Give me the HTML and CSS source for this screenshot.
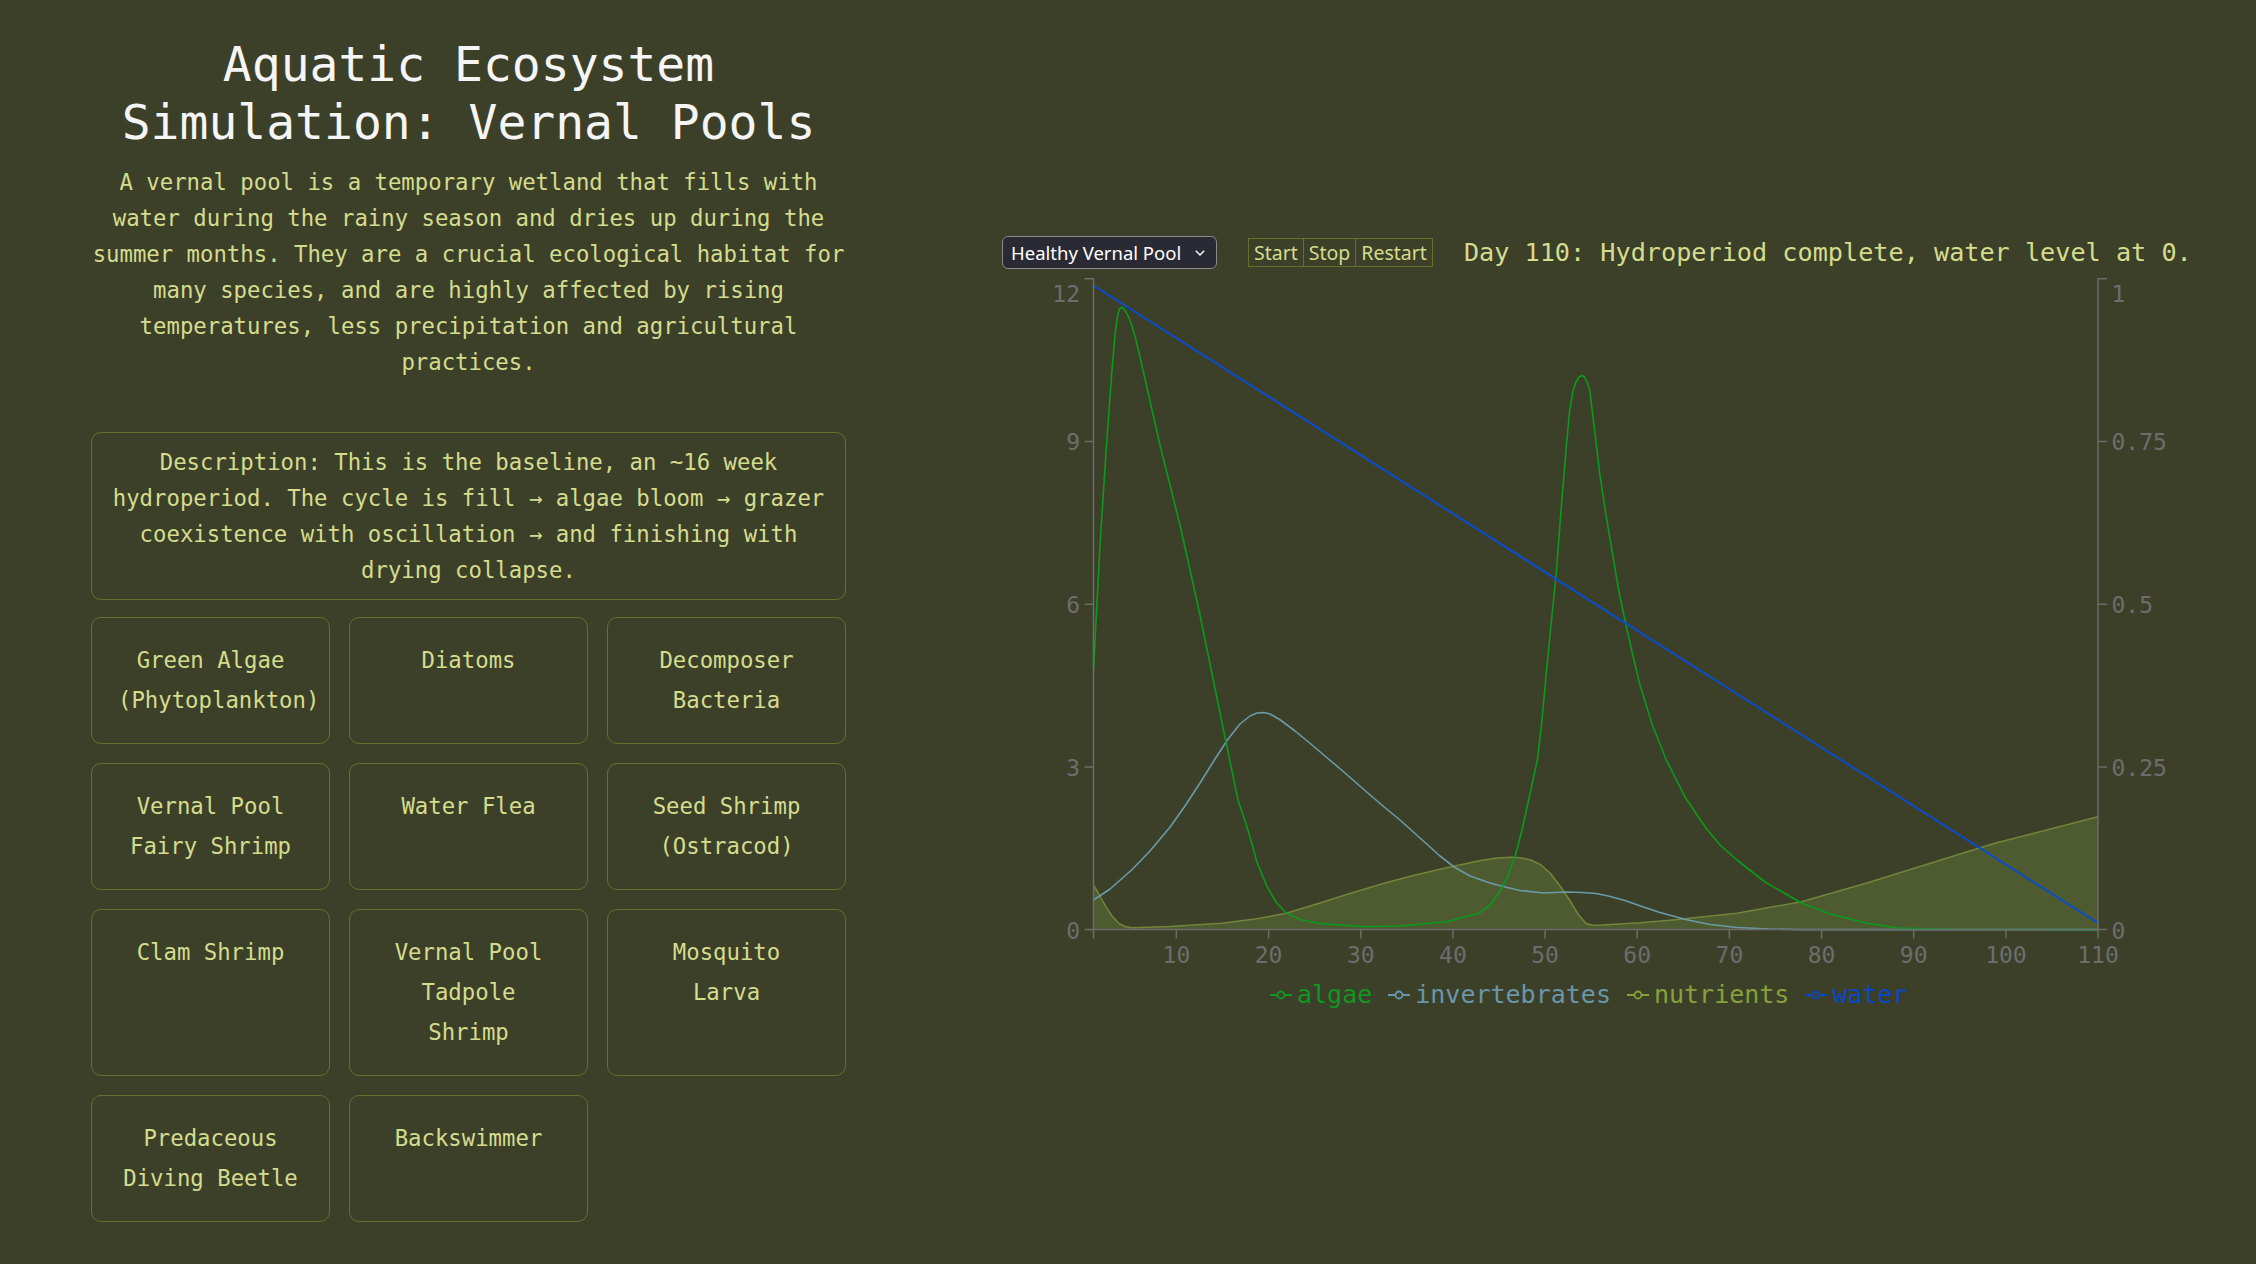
FILE: index.html
```html
<!DOCTYPE html>
<html lang="en">
<head>
  <meta charset="UTF-8" />
  <meta name="viewport" content="width=device-width, initial-scale=1.0"/>
  <title>Aquatic Ecosystem Simulation: Vernal Pools</title>
  <link rel="stylesheet" href="styles.css">
</head>
<body>
  <div class="page">
    <div class="intro">
      <h1>Aquatic Ecosystem Simulation: Vernal Pools</h1>
      <p class="lead">A vernal pool is a temporary wetland that fills with water during the rainy season and dries up during the summer months. They are a crucial ecological habitat for many species, and are highly affected by rising temperatures, less precipitation and agricultural practices.</p>

      <!-- Scenario description -->
      <div class="description">Description: This is the baseline, an ~16 week hydroperiod. The cycle is fill → algae bloom → grazer coexistence with oscillation → and finishing with drying collapse.</div>

      <!-- Species -->
      <div class="species">
        <div class="species-card">Green Algae (Phytoplankton)</div>
        <div class="species-card">Diatoms</div>
        <div class="species-card">Decomposer Bacteria</div>
        <div class="species-card">Vernal Pool Fairy Shrimp</div>
        <div class="species-card">Water Flea</div>
        <div class="species-card">Seed Shrimp (Ostracod)</div>
        <div class="species-card">Clam Shrimp</div>
        <div class="species-card">Vernal Pool Tadpole Shrimp</div>
        <div class="species-card">Mosquito Larva</div>
        <div class="species-card">Predaceous Diving Beetle</div>
        <div class="species-card">Backswimmer</div>
      </div>
    </div>

    <div class="sim">
      <div class="controls">
        <label class="scenario">
          <select name="scenario" id="scenario">
            <option value="healthy">Healthy Vernal Pool</option>
            <option value="drought">Drought Year</option>
            <option value="runoff">Agricultural Runoff</option>
          </select>
          <svg class="chevron" width="10" height="6" viewBox="0 0 10 6"><polyline points="0.8,0.8 5,5 9.2,0.8" fill="none" stroke="#ffffff" stroke-width="1.4"/></svg>
        </label>
        <div class="buttons">
          <button type="button" class="button">Start</button>
          <button type="button" class="button">Stop</button>
          <button type="button" class="button">Restart</button>
        </div>
        <span class="status">Day 110: Hydroperiod complete, water level at 0.</span>
      </div>

      <!-- Chart: drawn in page coordinates -->
      <svg class="chart" width="1240" height="700" viewBox="1002 275 1240 700">
        <path class="nutrients-area" d="M1093.5,885 L1100,896 L1105.9,906.7 L1112,916 L1118.8,923.3 L1125,926.5 L1131.6,927.7 L1170,926.5 L1221.8,923.3 L1255,919 L1286.2,913.3 L1320,903 L1350.6,893.3 L1385,883 L1415,875 L1450,867 L1479.5,860.7 L1497,858 L1511.7,857.3 L1522,858 L1531,860 L1541,865 L1550.3,873.3 L1560,886 L1569.6,900 L1578,914 L1585.7,923.3 L1592,925.2 L1601.9,925 L1640,922.8 L1672.7,920 L1737,913.3 L1801.5,901.7 L1866,883.3 L1930.4,863.3 L1994.8,843.3 L2098,816.7 L2098,929.6 L1093.5,929.6 Z"/>
        <path class="nutrients" d="M1093.5,885 L1100,896 L1105.9,906.7 L1112,916 L1118.8,923.3 L1125,926.5 L1131.6,927.7 L1170,926.5 L1221.8,923.3 L1255,919 L1286.2,913.3 L1320,903 L1350.6,893.3 L1385,883 L1415,875 L1450,867 L1479.5,860.7 L1497,858 L1511.7,857.3 L1522,858 L1531,860 L1541,865 L1550.3,873.3 L1560,886 L1569.6,900 L1578,914 L1585.7,923.3 L1592,925.2 L1601.9,925 L1640,922.8 L1672.7,920 L1737,913.3 L1801.5,901.7 L1866,883.3 L1930.4,863.3 L1994.8,843.3 L2098,816.7"/>
        <path class="invertebrates" d="M1093.5,900 L1110,889 L1131.6,870 L1150,851 L1170.3,826.7 L1185,806 L1200,783 L1215,759 L1228,739 L1240,724 L1250,716 L1257,713 L1264,712.5 L1270,714 L1279.7,719.5 L1295,731 L1309.7,743 L1325,756 L1345,773 L1371.3,796 L1383,806 L1400,820 L1420,838 L1440,856 L1453.7,866.7 L1470,876 L1490,883 L1505.2,887 L1520,890.5 L1544,893 L1565,892 L1582.5,892.5 L1596,893.5 L1608.3,896 L1625,900.5 L1640.5,906 L1660,912.5 L1685.6,919.5 L1710,924.5 L1737,927.5 L1769.3,929 L1800,929.6 L2098,929.6"/>
        <path class="algae" d="M1093.5,670 L1100,545 L1106.5,445 L1112,370 L1115,335 L1117.5,316 L1119.5,309 L1121.5,307.5 L1123.5,308.5 L1126,312 L1129,318 L1132,326 L1136,340 L1140,357 L1160,445 L1180,525 L1200,615 L1220,713 L1238,800 L1248,830 L1257,862 L1267,886.7 L1276,902 L1286,913 L1300,919.5 L1318,923.3 L1363,926.7 L1400,926 L1447,921.7 L1479.5,913 L1490,905 L1498.8,893 L1507,878 L1515,856.7 L1522,830 L1528,803 L1533,780 L1537.4,760 L1542,720 L1546.3,673 L1551,625 L1556.3,573 L1561,510 L1566.3,446.7 L1569.5,412 L1573,391 L1576,382 L1579,377 L1581.7,375.5 L1584.5,377 L1587,382 L1589.7,390 L1594,425 L1599.7,473.3 L1606,515 L1613,556.7 L1619,592 L1626,625 L1633,656 L1640,685 L1652,724 L1666.3,760 L1685,797 L1705,826.7 L1720,845 L1737,860 L1765,882 L1801.5,903 L1830,914 L1866,923 L1898,928 L1950,929.3 L2098,929.6"/>
        <path class="water" d="M1093.5,285.5 L2098,923"/>

        <!-- axes -->
        <g class="axis">
          <path d="M1084.5,278.7 H1093.5 V929.6 H1084.5"/>
          <path d="M1084.5,441.4 H1093.5 M1084.5,604.2 H1093.5 M1084.5,766.9 H1093.5"/>
          <path d="M2107,278.7 H2098 V929.6 H2107"/>
          <path d="M2107,441.4 H2098 M2107,604.2 H2098 M2107,766.9 H2098"/>
          <path d="M1093.5,938.6 V929.6 H2098 V938.6"/>
          <path d="M1176.4,929.6 v9 M1268.6,929.6 v9 M1360.8,929.6 v9 M1452.9,929.6 v9 M1545.1,929.6 v9 M1637.2,929.6 v9 M1729.4,929.6 v9 M1821.6,929.6 v9 M1913.7,929.6 v9 M2005.9,929.6 v9"/>
        </g>
        <g class="tick-labels" text-anchor="end">
          <text x="1080" y="302">12</text>
          <text x="1080" y="450.4">9</text>
          <text x="1080" y="613.2">6</text>
          <text x="1080" y="775.9">3</text>
          <text x="1080" y="938.6">0</text>
        </g>
        <g class="tick-labels" text-anchor="start">
          <text x="2111.5" y="302">1</text>
          <text x="2111.5" y="450.4">0.75</text>
          <text x="2111.5" y="613.2">0.5</text>
          <text x="2111.5" y="775.9">0.25</text>
          <text x="2111.5" y="938.6">0</text>
        </g>
        <g class="tick-labels" text-anchor="middle">
          <text x="1176.4" y="962.5">10</text>
          <text x="1268.6" y="962.5">20</text>
          <text x="1360.8" y="962.5">30</text>
          <text x="1452.9" y="962.5">40</text>
          <text x="1545.1" y="962.5">50</text>
          <text x="1637.2" y="962.5">60</text>
          <text x="1729.4" y="962.5">70</text>
          <text x="1821.6" y="962.5">80</text>
          <text x="1913.7" y="962.5">90</text>
          <text x="2005.9" y="962.5">100</text>
          <text x="2098" y="962.5">110</text>
        </g>
      </svg>

      <div class="legend">
        <span class="legend-item algae-key"><svg width="24" height="12" viewBox="0 0 24 12"><line x1="1" y1="6" x2="23" y2="6"/><circle cx="12" cy="6" r="3.5"/></svg>algae</span>
        <span class="legend-item invertebrates-key"><svg width="24" height="12" viewBox="0 0 24 12"><line x1="1" y1="6" x2="23" y2="6"/><circle cx="12" cy="6" r="3.5"/></svg>invertebrates</span>
        <span class="legend-item nutrients-key"><svg width="24" height="12" viewBox="0 0 24 12"><line x1="1" y1="6" x2="23" y2="6"/><circle cx="12" cy="6" r="3.5"/></svg>nutrients</span>
        <span class="legend-item water-key"><svg width="24" height="12" viewBox="0 0 24 12"><line x1="1" y1="6" x2="23" y2="6"/><circle cx="12" cy="6" r="3.5"/></svg>water</span>
      </div>
    </div>
  </div>
</body>
</html>
```

FILE: styles.css
```css
html {
  background-color: #3d4029;
}
body {
  margin: 0;
  font-family: "DejaVu Sans Mono", monospace;
  color: #d4dc8e;
  background-color: #3d4029;
}
::-webkit-scrollbar {
  width: 10px;
}
::-webkit-scrollbar-track {
  background: #3d4029;
  margin: 19px 0;
}
::-webkit-scrollbar-thumb {
  background: #8b8b8b;
  border-left: 3px solid #3d4029;
  border-right: 4px solid #3d4029;
}
.page {
  display: flex;
  align-items: flex-start;
}
.intro {
  width: 755px;
  margin-left: 91px;
  padding-top: 35px;
  padding-bottom: 62px;
}
h1 {
  margin: 0;
  font-size: 48px;
  line-height: 58px;
  font-weight: normal;
  color: #f5f5f5;
  text-align: center;
}
.lead {
  margin: 13px 0 0;
  font-size: 22.3px;
  line-height: 36px;
  text-align: center;
}
.description {
  margin-top: 52px;
  padding: 11px 16px;
  border: 1px solid #666e2d;
  border-radius: 10px;
  font-size: 22.3px;
  line-height: 36px;
  text-align: center;
}
.species {
  margin-top: 17px;
  display: grid;
  grid-template-columns: repeat(3, minmax(0, 1fr));
  gap: 19px;
}
.species-card {
  padding: 22px 26px 23px;
  border: 1px solid #666e2d;
  border-radius: 10px;
  font-size: 22.3px;
  line-height: 40px;
  text-align: center;
}
.sim {
  margin-left: 156px;
  padding-top: 236px;
}
.controls {
  display: flex;
  align-items: center;
  height: 33px;
}
.scenario {
  display: flex;
  align-items: center;
  box-sizing: border-box;
  width: 215px;
  height: 33px;
  padding: 0 11px 0 8px;
  border: 1px solid #8a8a8a;
  border-radius: 6px;
  background-color: #2a2a34;
}
.scenario select {
  appearance: none;
  -webkit-appearance: none;
  border: none;
  outline: none;
  padding: 0;
  background: transparent;
  color: #ffffff;
  font-family: "Noto Sans", sans-serif;
  font-size: 18.5px;
}
.chevron {
  margin-left: auto;
}
.buttons {
  display: flex;
  margin-left: 31px;
}
.button {
  height: 29px;
  padding: 0 5px;
  margin: 0;
  border: 1px solid #66702a;
  background: transparent;
  color: #d4dc8e;
  font-family: "Noto Sans", sans-serif;
  font-size: 19.5px;
  cursor: pointer;
}
.button + .button {
  margin-left: -1px;
}
.status {
  margin-left: 31px;
  font-size: 25.2px;
  line-height: 33px;
  white-space: nowrap;
}
.chart {
  display: block;
  margin-top: 6px;
}
.chart path {
  fill: none;
  stroke-linejoin: round;
}
.chart .nutrients-area {
  fill: #4e5b31;
  stroke: none;
}
.chart .nutrients {
  stroke: #72853a;
  stroke-width: 1.5;
}
.chart .invertebrates {
  stroke: #6a9aa9;
  stroke-width: 1.6;
}
.chart .algae {
  stroke: #0a9a1e;
  stroke-width: 1.6;
}
.chart .water {
  stroke: #0a4ccc;
  stroke-width: 2;
}
.chart .axis path {
  stroke: #6b6b6b;
  stroke-width: 1.5;
}
.tick-labels text {
  font-family: "DejaVu Sans Mono", monospace;
  font-size: 23px;
  fill: #6d6d6d;
}
.legend {
  display: flex;
  gap: 15px;
  margin-top: 5px;
  padding-left: 267px;
  font-size: 25px;
  line-height: 30px;
}
.legend-item {
  display: flex;
  align-items: center;
  gap: 4px;
}
.legend-item svg line {
  stroke-width: 2;
}
.legend-item svg circle {
  fill: #3d4029;
  stroke-width: 1.8;
}
.algae-key { color: #0f9623; }
.algae-key svg * { stroke: #0f9623; }
.invertebrates-key { color: #6996aa; }
.invertebrates-key svg * { stroke: #6996aa; }
.nutrients-key { color: #88a03c; }
.nutrients-key svg * { stroke: #88a03c; }
.water-key { color: #0a46c8; }
.water-key svg * { stroke: #0a46c8; }
```
